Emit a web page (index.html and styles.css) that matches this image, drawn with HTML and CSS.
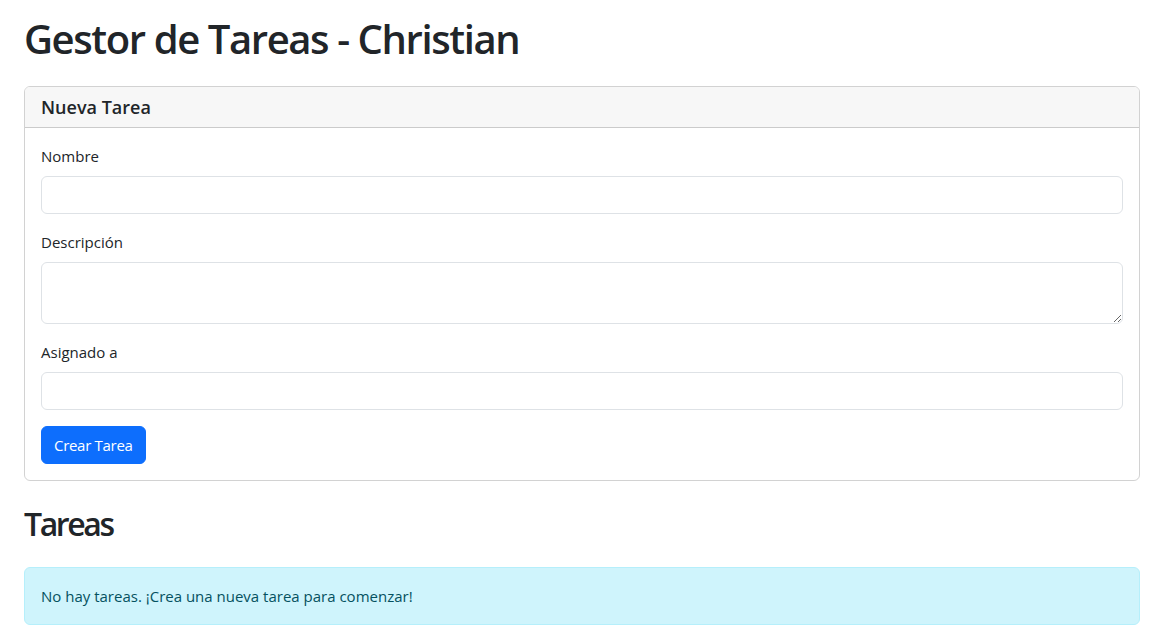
FILE: index.html
```html
<!DOCTYPE html>
<html lang="es">
<head>
<meta charset="utf-8">
<title>Gestor de Tareas</title>
<link rel="stylesheet" href="styles.css">
</head>
<body>
<div class="container">
  <h1 class="title">Gestor de Tareas - Christian</h1>
  <div class="card">
    <div class="card-header"><h5 class="card-title">Nueva Tarea</h5></div>
    <div class="card-body">
      <div class="field">
        <label class="label" for="nombre">Nombre</label>
        <input class="control" id="nombre" type="text">
      </div>
      <div class="field">
        <label class="label" for="desc">Descripción</label>
        <textarea class="control area" id="desc" rows="2"></textarea>
      </div>
      <div class="field">
        <label class="label" for="asig">Asignado a</label>
        <input class="control" id="asig" type="text">
      </div>
      <button class="btn" type="button">Crear Tarea</button>
    </div>
  </div>
  <h2 class="section">Tareas</h2>
  <div class="alert">No hay tareas. ¡Crea una nueva tarea para comenzar!</div>
</div>
</body>
</html>
```
FILE: styles.css
```css
* { box-sizing: border-box; }
html, body { margin: 0; padding: 0; background: #fff; }
body {
  font-family: "Open Sans", "Noto Sans", sans-serif;
  font-size: 16px;
  line-height: 24px;
  color: #212529;
}
.container {
  margin: 0 10px 0 24px;
  padding-top: 15px;
}
.title {
  margin: 0 0 23px;
  font-size: 40px;
  font-weight: 600;
  line-height: 48px;
  letter-spacing: -1.4px;
}
.card {
  border: 1px solid rgba(0,0,0,.175);
  border-radius: 6px;
  margin-bottom: 24px;
}
.card-header {
  background: #f7f7f7;
  border-bottom: 1px solid rgba(0,0,0,.175);
  border-radius: 5px 5px 0 0;
  padding: 8px 16px;
}
.card-title {
  margin: 0;
  font-size: 18px;
  font-weight: 600;
  line-height: 24px;
}
.card-body { padding: 16px; }
.field { margin-bottom: 16px; }
.label {
  display: block;
  margin-bottom: 8px;
  font-size: 15px;
  line-height: 24px;
}
.control {
  display: block;
  width: 100%;
  height: 38px;
  padding: 6px 12px;
  font: inherit;
  border: 1px solid #dee2e6;
  border-radius: 6px;
  background: #fff;
}
.area {
  height: 62px;
  resize: vertical;
}
.btn {
  display: inline-block;
  height: 38px;
  padding: 6px 12px;
  font-family: inherit;
  font-size: 15px;
  letter-spacing: -0.02em;
  line-height: 24px;
  color: #fff;
  background: #0d6efd;
  border: 1px solid #0d6efd;
  border-radius: 6px;
}
.section {
  margin: 0 0 24px;
  font-size: 32px;
  font-weight: 600;
  line-height: 38px;
  letter-spacing: -2.4px;
}
.alert {
  padding: 16px;
  color: #055160;
  background: #cff4fc;
  border: 1px solid #b6effb;
  border-radius: 6px;
  font-size: 15px;
  line-height: 24px;
}
```
